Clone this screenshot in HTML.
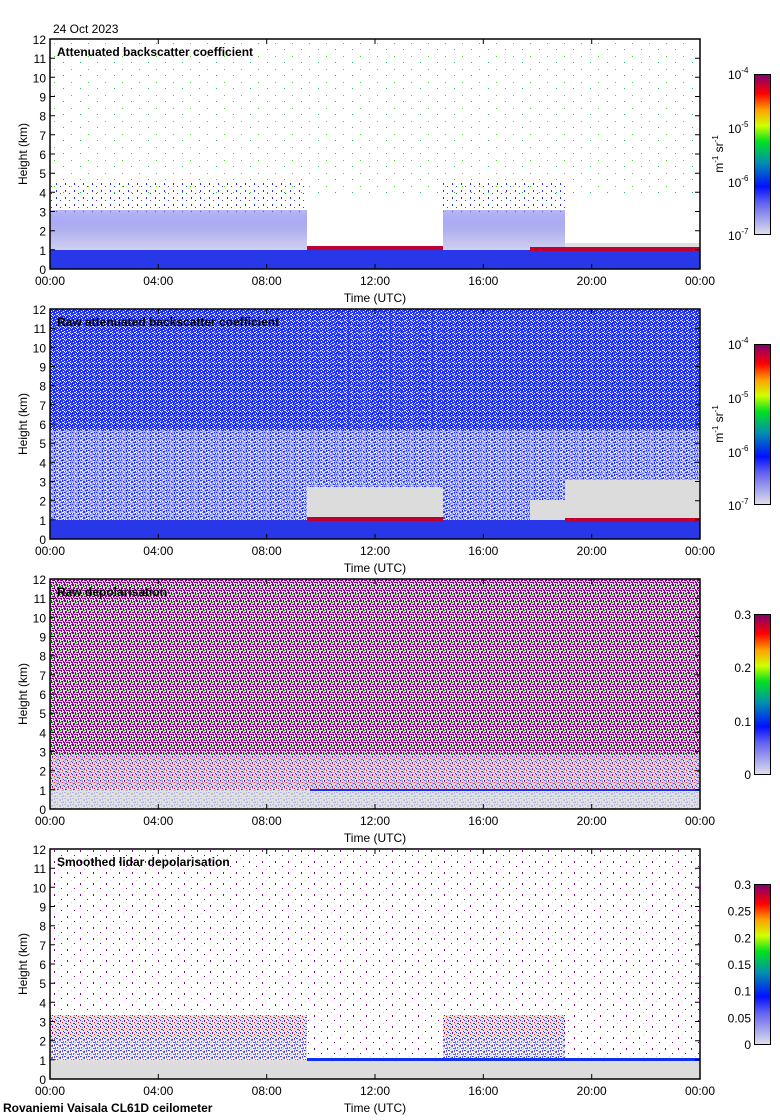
<!DOCTYPE html>
<html><head><meta charset="utf-8"><style>
html,body{margin:0;padding:0;background:#fff;}
svg{display:block;font-family:"Liberation Sans",Arial,sans-serif;}
</style></head><body>
<svg width="780" height="1120" viewBox="0 0 780 1120" xmlns="http://www.w3.org/2000/svg">
<defs>
<linearGradient id="cbB" x1="0" y1="1" x2="0" y2="0">
<stop offset="0" stop-color="#e0e0ea"/><stop offset="0.2" stop-color="#6060f0"/><stop offset="0.3" stop-color="#0010ff"/><stop offset="0.45" stop-color="#0090b0"/><stop offset="0.58" stop-color="#00e020"/><stop offset="0.68" stop-color="#d0ff00"/><stop offset="0.78" stop-color="#ffa000"/><stop offset="0.88" stop-color="#ff0000"/><stop offset="1" stop-color="#800070"/></linearGradient>
<pattern id="pNoiseBlue" width="8" height="6" patternUnits="userSpaceOnUse">
<rect width="8" height="6" fill="#fff"/><rect x="0" y="0" width="2" height="1" fill="#2030ff"/><rect x="3" y="1" width="2" height="2" fill="#3040f0"/><rect x="6" y="0" width="1" height="2" fill="#1020e0"/><rect x="1" y="3" width="1" height="2" fill="#5060ff"/><rect x="5" y="4" width="2" height="1" fill="#2030ff"/><rect x="2" y="5" width="2" height="1" fill="#d0d0e8"/><rect x="7" y="3" width="1" height="2" fill="#2040ff"/><rect x="4" y="3" width="1" height="1" fill="#c8c8e0"/></pattern>
<pattern id="pDenseBlue" width="6" height="6" patternUnits="userSpaceOnUse">
<rect width="6" height="6" fill="#2838f0"/><rect x="1" y="0" width="1" height="1" fill="#fff"/><rect x="4" y="1" width="1" height="1" fill="#fff"/><rect x="2" y="2" width="2" height="1" fill="#e0e0f0"/><rect x="0" y="3" width="1" height="1" fill="#fff"/><rect x="5" y="4" width="1" height="1" fill="#fff"/><rect x="3" y="5" width="1" height="1" fill="#fff"/><rect x="0" y="5" width="1" height="1" fill="#1018c0"/><rect x="4" y="3" width="1" height="1" fill="#fff"/></pattern>
<pattern id="pNoiseGreen" width="7" height="6" patternUnits="userSpaceOnUse">
<rect x="1" y="1" width="1" height="1" fill="#10d040"/><rect x="5" y="3" width="1" height="1" fill="#20c060"/><rect x="3" y="5" width="1" height="1" fill="#00b080"/></pattern>
<pattern id="pPurple" width="8" height="8" patternUnits="userSpaceOnUse">
<rect width="8" height="8" fill="#dcdcdc"/><rect x="0" y="0" width="2" height="2" fill="#880088"/><rect x="3" y="0" width="1" height="3" fill="#880088"/><rect x="5" y="1" width="2" height="1" fill="#880088"/><rect x="6" y="2" width="1" height="3" fill="#880088"/><rect x="1" y="3" width="2" height="2" fill="#880088"/><rect x="4" y="4" width="2" height="1" fill="#880088"/><rect x="0" y="6" width="1" height="2" fill="#880088"/><rect x="2" y="6" width="3" height="1" fill="#880088"/><rect x="5" y="6" width="1" height="2" fill="#880088"/><rect x="7" y="5" width="1" height="2" fill="#880088"/><rect x="4" y="2" width="1" height="1" fill="#00c000"/><rect x="7" y="0" width="1" height="1" fill="#ff2000"/><rect x="1" y="5" width="1" height="1" fill="#2030ff"/></pattern>
<pattern id="pMixed" width="8" height="6" patternUnits="userSpaceOnUse">
<rect width="8" height="6" fill="#e4e4f0"/><rect x="0" y="0" width="1" height="1" fill="#2030ff"/><rect x="2" y="1" width="1" height="1" fill="#00c030"/><rect x="4" y="0" width="1" height="2" fill="#880088"/><rect x="6" y="2" width="1" height="1" fill="#ff2000"/><rect x="1" y="3" width="2" height="1" fill="#3040ff"/><rect x="5" y="4" width="1" height="1" fill="#f0e000"/><rect x="7" y="5" width="1" height="1" fill="#2030ff"/><rect x="3" y="4" width="1" height="1" fill="#880088"/></pattern>
<pattern id="pSparseP" width="13" height="11" patternUnits="userSpaceOnUse">
<rect x="2" y="3" width="1" height="2" fill="#880088"/><rect x="9" y="8" width="1" height="1" fill="#880088"/><rect x="6" y="0" width="1" height="1" fill="#d0d0d0"/></pattern>
<pattern id="pSparseG" width="17" height="13" patternUnits="userSpaceOnUse">
<rect x="3" y="4" width="1" height="1" fill="#40e020"/><rect x="12" y="10" width="1" height="1" fill="#20c060"/></pattern>
<pattern id="pSparseB" width="9" height="7" patternUnits="userSpaceOnUse">
<rect x="2" y="1" width="1" height="2" fill="#2030ff"/><rect x="6" y="4" width="1" height="1" fill="#3040f0"/></pattern>
<linearGradient id="haze" x1="0" y1="0" x2="0" y2="1"><stop offset="0" stop-color="#7070f0" stop-opacity="0.5"/><stop offset="0.5" stop-color="#b0b0f0"/><stop offset="1" stop-color="#d0d0f0"/></linearGradient>
</defs>

<text x="53" y="33" font-size="12">24 Oct 2023</text>

<!-- PANEL 1 -->
<g>
<rect x="50" y="39" width="650" height="230" fill="#fff"/>
<rect x="50" y="39" width="650" height="160" fill="url(#pSparseG)"/>
<rect x="50" y="180" width="257" height="32" fill="url(#pSparseB)"/>
<rect x="443" y="180" width="122" height="32" fill="url(#pSparseB)"/>
<rect x="50" y="210" width="257" height="40" fill="url(#haze)"/>
<rect x="443" y="210" width="122" height="40" fill="url(#haze)"/>
<rect x="50" y="250" width="650" height="19" fill="#2838e8"/>
<rect x="307" y="246" width="136" height="4" fill="#c00030"/>
<rect x="530" y="247" width="170" height="4" fill="#c00030"/>
<rect x="565" y="243" width="135" height="4" fill="#e0e0e0"/>
</g>

<!-- PANEL 2 -->
<g>
<rect x="50" y="309" width="650" height="230" fill="url(#pDenseBlue)"/>
<rect x="307" y="309" width="136" height="120" fill="url(#pNoiseGreen)"/>
<rect x="50" y="430" width="650" height="90" fill="url(#pNoiseBlue)" opacity="0.6"/>
<rect x="307" y="487" width="136" height="33" fill="#dcdcdc"/>
<rect x="565" y="480" width="135" height="40" fill="#dcdcdc"/>
<rect x="530" y="500" width="35" height="20" fill="#dcdcdc"/>
<rect x="50" y="520" width="650" height="19" fill="#2838e8"/>
<rect x="307" y="517" width="136" height="4" fill="#c00030"/>
<rect x="565" y="518" width="135" height="4" fill="#c00030"/>
</g>

<!-- PANEL 3 -->
<g>
<rect x="50" y="579" width="650" height="230" fill="url(#pPurple)"/>
<rect x="50" y="755" width="650" height="35" fill="url(#pMixed)" opacity="0.8"/>
<rect x="50" y="790" width="650" height="19" fill="#dcdcdc"/>
<rect x="50" y="790" width="650" height="19" fill="url(#pNoiseBlue)" opacity="0.2"/>
<rect x="310" y="789" width="390" height="2" fill="#1030f0"/>
</g>

<!-- PANEL 4 -->
<g>
<rect x="50" y="849" width="650" height="230" fill="#fff"/>
<rect x="50" y="849" width="650" height="210" fill="url(#pSparseP)"/>
<rect x="50" y="1015" width="257" height="45" fill="url(#pMixed)"/>
<rect x="443" y="1015" width="122" height="45" fill="url(#pMixed)"/>
<rect x="50" y="1038" width="257" height="22" fill="url(#pNoiseBlue)" opacity="0.7"/>
<rect x="443" y="1038" width="122" height="22" fill="url(#pNoiseBlue)" opacity="0.7"/>
<rect x="50" y="1060" width="650" height="19" fill="#dcdcdc"/>
<rect x="307" y="1058" width="393" height="3" fill="#1030f0"/>
</g>

<!-- axes, ticks -->
<g fill="none" stroke="#000" stroke-width="1.5">
<rect x="50" y="39" width="650" height="230"/>
<rect x="50" y="309" width="650" height="230"/>
<rect x="50" y="579" width="650" height="230"/>
<rect x="50" y="849" width="650" height="230"/>
</g>
<g stroke="#000" stroke-width="1">
<path id="tk" d="M50 58.2h5M50 77.3h5M50 96.5h5M50 115.7h5M50 134.8h5M50 154h5M50 173.2h5M50 192.3h5M50 211.5h5M50 230.7h5M50 249.8h5M700 58.2h-5M700 77.3h-5M700 96.5h-5M700 115.7h-5M700 134.8h-5M700 154h-5M700 173.2h-5M700 192.3h-5M700 211.5h-5M700 230.7h-5M700 249.8h-5M158.3 39v5M266.7 39v5M375 39v5M483.3 39v5M591.7 39v5M158.3 269v-5M266.7 269v-5M375 269v-5M483.3 269v-5M591.7 269v-5"/>
<use href="#tk" transform="translate(0,270)"/>
<use href="#tk" transform="translate(0,540)"/>
<use href="#tk" transform="translate(0,810)"/>
</g>

<g font-size="12" fill="#000">
<g id="lab1">
<g text-anchor="end"><text x="46" y="274">0</text><text x="46" y="254.8">1</text><text x="46" y="235.7">2</text><text x="46" y="216.5">3</text><text x="46" y="197.3">4</text><text x="46" y="178.2">5</text><text x="46" y="159">6</text><text x="46" y="139.8">7</text><text x="46" y="120.7">8</text><text x="46" y="101.5">9</text><text x="46" y="82.3">10</text><text x="46" y="63.2">11</text><text x="46" y="44">12</text></g>
<g text-anchor="middle"><text x="50" y="285">00:00</text><text x="158.3" y="285">04:00</text><text x="266.7" y="285">08:00</text><text x="375" y="285">12:00</text><text x="483.3" y="285">16:00</text><text x="591.7" y="285">20:00</text><text x="700" y="285">00:00</text><text x="375" y="302">Time (UTC)</text></g>
<text transform="translate(27,154) rotate(-90)" text-anchor="middle">Height (km)</text>
</g>
<use href="#lab1" transform="translate(0,270)"/>
<use href="#lab1" transform="translate(0,540)"/>
<use href="#lab1" transform="translate(0,810)"/>
</g>

<g font-size="12" font-weight="bold" fill="#000">
<text x="57" y="56">Attenuated backscatter coefficient</text>
<text x="57" y="326">Raw attenuated backscatter coefficient</text>
<text x="57" y="596">Raw depolarisation</text>
<text x="57" y="866">Smoothed lidar depolarisation</text>
<text x="3" y="1112">Rovaniemi Vaisala CL61D ceilometer</text>
</g>

<!-- colorbars -->
<g stroke="#000" stroke-width="1">
<rect x="754.5" y="74.5" width="16" height="160" fill="url(#cbB)"/>
<rect x="754.5" y="344.5" width="16" height="160" fill="url(#cbB)"/>
<rect x="754.5" y="614.5" width="16" height="160" fill="url(#cbB)"/>
<rect x="754.5" y="884.5" width="16" height="160" fill="url(#cbB)"/>
</g>
<g font-size="12" fill="#000">
<g id="cbl1">
<text x="728" y="79">10<tspan font-size="8" dy="-6">-4</tspan></text>
<text x="728" y="133">10<tspan font-size="8" dy="-6">-5</tspan></text>
<text x="728" y="187">10<tspan font-size="8" dy="-6">-6</tspan></text>
<text x="728" y="240">10<tspan font-size="8" dy="-6">-7</tspan></text>
<text transform="translate(723,154) rotate(-90)" text-anchor="middle">m<tspan font-size="8" dy="-5">-1</tspan><tspan dy="5"> sr</tspan><tspan font-size="8" dy="-5">-1</tspan></text>
</g>
<use href="#cbl1" transform="translate(0,270)"/>
<g text-anchor="end">
<text x="751" y="619">0.3</text><text x="751" y="672">0.2</text><text x="751" y="726">0.1</text><text x="751" y="779">0</text>
<text x="751" y="889">0.3</text><text x="751" y="915.7">0.25</text><text x="751" y="942.3">0.2</text><text x="751" y="969">0.15</text><text x="751" y="995.7">0.1</text><text x="751" y="1022.3">0.05</text><text x="751" y="1049">0</text>
</g>
</g>
</svg>
</body></html>
